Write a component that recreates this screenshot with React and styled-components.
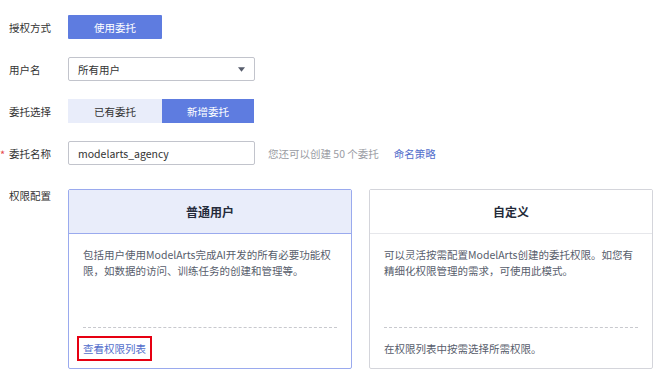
import React, { useState } from 'react'
import styled, { createGlobalStyle } from 'styled-components'

const GlobalStyle = createGlobalStyle`
  body {
    margin: 0;
    background: #ffffff;
    font-family: "Noto Sans CJK SC", "Noto Sans", sans-serif;
    font-size: 10.5px;
    color: #333;
  }
`

const App = () => {
  const [mode, setMode] = useState('new')
  const [card, setCard] = useState('normal')

  return (
    <Page>
      <GlobalStyle />

      <Row>
        <Label>授权方式</Label>
        <PrimaryButton>使用委托</PrimaryButton>
      </Row>

      <Row>
        <Label>用户名</Label>
        <Select>
          <span>所有用户</span>
          <Caret viewBox="0 0 8 5">
            <path d="M0 0 H8 L4 5 Z" fill="#575d6c" />
          </Caret>
        </Select>
      </Row>

      <Row>
        <Label>委托选择</Label>
        <Toggle>
          <ToggleItem $active={mode === 'exist'} $w={94} onClick={() => setMode('exist')}>已有委托</ToggleItem>
          <ToggleItem $active={mode === 'new'} $w={92} onClick={() => setMode('new')}>新增委托</ToggleItem>
        </Toggle>
      </Row>

      <Row>
        <Label><Required>*</Required>委托名称</Label>
        <Input defaultValue="modelarts_agency" />
        <Hint>您还可以创建 50 个委托</Hint>
        <TextLink $gap={15}>命名策略</TextLink>
      </Row>

      <CardRow>
        <Label $top>权限配置</Label>
        <Cards>
          <Card $active={card === 'normal'} onClick={() => setCard('normal')}>
            <CardHeader $active={card === 'normal'}>普通用户</CardHeader>
            <CardBody>
              <Desc>包括用户使用ModelArts完成AI开发的所有必要功能权限，如数据的访问、训练任务的创建和管理等。</Desc>
              <Divider />
              <Footer>
                <Marked><TextLink>查看权限列表</TextLink></Marked>
              </Footer>
            </CardBody>
          </Card>
          <Card $active={card === 'custom'} onClick={() => setCard('custom')}>
            <CardHeader $active={card === 'custom'}>自定义</CardHeader>
            <CardBody>
              <Desc>可以灵活按需配置ModelArts创建的委托权限。如您有精细化权限管理的需求，可使用此模式。</Desc>
              <Divider />
              <Footer>在权限列表中按需选择所需权限。</Footer>
            </CardBody>
          </Card>
        </Cards>
      </CardRow>
    </Page>
  )
}

const Page = styled.div`
  display: flex;
  flex-direction: column;
  gap: 18px;
  padding: 15px 0 0 0;
`
const Row = styled.div`
  display: flex;
  align-items: center;
  height: 24px;
`
const CardRow = styled.div`
  display: flex;
  align-items: flex-start;
  margin-top: 6px;
`
const Label = styled.div`
  position: relative;
  width: 59px;
  padding-left: 9px;
  flex-shrink: 0;
  color: #333;
  line-height: 15px;
  margin-top: ${p => (p.$top ? '-1px' : '0')};
`
const Required = styled.span`
  position: absolute;
  left: 0;
  top: 1px;
  color: #e5484d;
  font-size: 11px;
`
const PrimaryButton = styled.button`
  width: 94px;
  height: 24px;
  border: none;
  border-radius: 1px;
  background: #5e7ce0;
  color: #fff;
  font-family: inherit;
  font-size: 10.5px;
  padding: 0;
`
const Select = styled.div`
  box-sizing: border-box;
  width: 187px;
  height: 24px;
  border: 1px solid #c2c4cc;
  border-radius: 2px;
  display: flex;
  align-items: center;
  justify-content: space-between;
  padding: 0 9px 0 9px;
  color: #333;
`
const Caret = styled.svg`
  width: 7px;
  height: 5px;
`
const Toggle = styled.div`
  display: flex;
  height: 24px;
`
const ToggleItem = styled.div`
  width: ${p => p.$w}px;
  display: flex;
  align-items: center;
  justify-content: center;
  background: ${p => (p.$active ? '#5e7ce0' : '#e9edfa')};
  color: ${p => (p.$active ? '#fff' : '#333')};
  cursor: pointer;
`
const Input = styled.input`
  box-sizing: border-box;
  width: 187px;
  height: 24px;
  border: 1px solid #c2c4cc;
  border-radius: 2px;
  padding: 0 9px;
  font-family: inherit;
  font-size: 10.5px;
  color: #333;
  outline: none;
`
const Hint = styled.span`
  margin-left: 13px;
  color: #9a9ca3;
`
const TextLink = styled.a`
  margin-left: ${p => p.$gap || 0}px;
  color: #526ecc;
  cursor: pointer;
`
const Cards = styled.div`
  display: flex;
  gap: 17px;
`
const Card = styled.div`
  box-sizing: border-box;
  width: 284px;
  height: 180px;
  display: flex;
  flex-direction: column;
  border: 1px solid ${p => (p.$active ? '#9aaaee' : '#d4d5db')};
  border-radius: 2px;
  cursor: pointer;
`
const CardHeader = styled.div`
  height: 43px;
  flex-shrink: 0;
  display: flex;
  align-items: center;
  justify-content: center;
  font-size: 12px;
  font-weight: bold;
  color: #252b3a;
  background: ${p => (p.$active ? '#e9edfa' : '#fff')};
  border-bottom: 1px solid ${p => (p.$active ? '#9aaaee' : '#e6e7eb')};
`
const CardBody = styled.div`
  flex: 1;
  display: flex;
  flex-direction: column;
  padding: 13px 14px 12px 14px;
`
const Desc = styled.p`
  flex: 1;
  margin: 0;
  line-height: 15.5px;
  color: #575d6c;
`
const Divider = styled.div`
  border-top: 1px dashed #c8c9ce;
  margin-bottom: 13px;
`
const Footer = styled.div`
  line-height: 15px;
  color: #575d6c;
  display: flex;
`
const Marked = styled.span`
  border: 2px solid #e60012;
  padding: 3px 4px;
  margin: -5px 0 -5px -6px;
`

export default App
